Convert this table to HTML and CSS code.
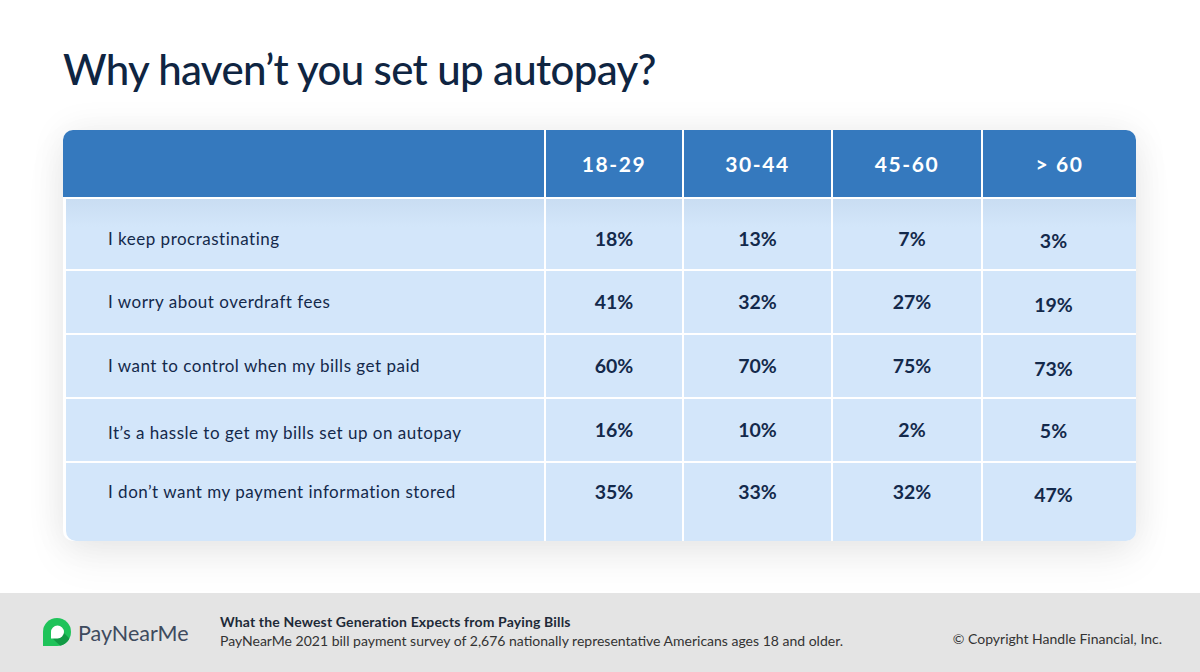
FILE: index.html
```html
<!DOCTYPE html>
<html lang="en">
<head>
<meta charset="utf-8">
<title>Why haven't you set up autopay?</title>
<link rel="stylesheet" href="styles.css">
</head>
<body>
<div class="page">
  <main class="main">
    <h1 class="title">Why haven’t you set up autopay?</h1>
    <div class="table">
      <div class="head">
        <div class="hcell hlabel"></div>
        <div class="hcell">18-29</div>
        <div class="hcell">30-44</div>
        <div class="hcell">45-60</div>
        <div class="hcell">&gt; 60</div>
      </div>
      <div class="body">
        <div class="row r1">
          <div class="cell label">I keep procrastinating</div>
          <div class="cell num">18%</div>
          <div class="cell num">13%</div>
          <div class="cell num c3">7%</div>
          <div class="cell num c4">3%</div>
        </div>
        <div class="row">
          <div class="cell label">I worry about overdraft fees</div>
          <div class="cell num">41%</div>
          <div class="cell num">32%</div>
          <div class="cell num c3">27%</div>
          <div class="cell num c4">19%</div>
        </div>
        <div class="row">
          <div class="cell label">I want to control when my bills get paid</div>
          <div class="cell num">60%</div>
          <div class="cell num">70%</div>
          <div class="cell num c3">75%</div>
          <div class="cell num c4">73%</div>
        </div>
        <div class="row r4">
          <div class="cell label">It’s a hassle to get my bills set up on autopay</div>
          <div class="cell num">16%</div>
          <div class="cell num">10%</div>
          <div class="cell num c3">2%</div>
          <div class="cell num c4">5%</div>
        </div>
        <div class="row r5">
          <div class="cell label">I don’t want my payment information stored</div>
          <div class="cell num">35%</div>
          <div class="cell num">33%</div>
          <div class="cell num c3">32%</div>
          <div class="cell num c4">47%</div>
        </div>
      </div>
    </div>
  </main>
  <footer class="footer">
    <div class="brand">
      <svg class="logo" width="34" height="30" viewBox="0 0 34 30" aria-hidden="true">
        <defs>
          <clipPath id="pin">
            <path d="M3 29 L3 15 A14 14 0 1 1 17 29 Z"/>
          </clipPath>
        </defs>
        <path d="M3 29 L3 15 A14 14 0 1 1 17 29 Z" fill="#1fc35a"/>
        <g clip-path="url(#pin)">
          <path d="M13 22 L21 13 L36 28 L28 36 Z" fill="#129a45"/>
        </g>
        <path d="M11 21.5 L11 15 A6.5 6.5 0 1 1 17.5 21.5 Z" fill="#ffffff"/>
      </svg>
      <span class="brand-name">PayNearMe</span>
    </div>
    <div class="source">
      <div class="source-title">What the Newest Generation Expects from Paying Bills</div>
      <div class="source-text">PayNearMe 2021 bill payment survey of 2,676 nationally representative Americans ages 18 and older.</div>
    </div>
    <div class="copy">© Copyright Handle Financial, Inc.</div>
  </footer>
</div>
</body>
</html>
```
FILE: styles.css
```css
html, body {
  margin: 0;
  padding: 0;
}
body {
  width: 1200px;
  height: 672px;
  overflow: hidden;
  background: #ffffff;
  font-family: "Lato", "Liberation Sans", sans-serif;
  color: #13294b;
}
.page {
  display: flex;
  flex-direction: column;
  height: 672px;
}
.main {
  flex: 1;
  padding: 0 64px 0 63px;
}
.title {
  margin: 0;
  padding-top: 41px;
  height: 130px;
  box-sizing: border-box;
  font-family: "Lato", "Liberation Sans", sans-serif;
  font-weight: 500;
  font-size: 42px;
  line-height: 56px;
  color: #0f2542;
  letter-spacing: -0.65px;
}
.table {
  border-radius: 10px;
  box-shadow: 0 0 36px rgba(0, 0, 0, 0.07), 0 18px 44px rgba(0, 0, 0, 0.06);
  background: #ffffff;
}
.head {
  display: grid;
  grid-template-columns: 481px 136px 147px 148px 1fr;
  column-gap: 2px;
  background: #ffffff;
  border-radius: 10px 10px 0 0;
  overflow: hidden;
}
.hcell {
  background: #3579be;
  height: 67px;
  display: flex;
  align-items: center;
  justify-content: center;
  color: #ffffff;
  font-weight: 700;
  font-size: 21px;
  letter-spacing: 1.6px;
}
.body {
  margin-left: 3px;
  display: flex;
  flex-direction: column;
  row-gap: 2px;
  padding-top: 2px;
  border-radius: 0 0 10px 10px;
  overflow: hidden;
}
.row {
  display: grid;
  grid-template-columns: 478px 136px 147px 148px 1fr;
  column-gap: 2px;
  height: 62px;
}
.row.r1 { height: 70px; }
.row.r5 { height: 78px; }
.cell {
  background: #d3e6fa;
  box-sizing: border-box;
  padding-top: 20px;
  line-height: 22px;
}
.r1 .cell {
  padding-top: 29px;
  background: linear-gradient(#c9ddf2, #d3e6fa 40%);
}
.r4 .cell { padding-top: 20px; }
.r5 .cell { padding-top: 18px; }
.label {
  padding-left: 42px;
  font-size: 17px;
  letter-spacing: 0.5px;
  font-weight: 400;
  color: #13294b;
}
.num {
  text-align: center;
  font-size: 19.5px;
  font-weight: 700;
  color: #13294b;
}
.num.c3 { padding-left: 10px; }
.num.c4 { padding-right: 12px; }
.row .cell.c4 { padding-top: 23px; }
.r1 .cell.c4 { padding-top: 31px; }
.r4 .cell.c4 { padding-top: 21px; }
.r5 .cell.c4 { padding-top: 21px; }
.r4 .label { padding-top: 23px; }

.footer {
  height: 79px;
  background: #e4e4e4;
  display: flex;
  align-items: center;
  padding: 0 38px 0 40px;
  box-sizing: border-box;
}
.brand {
  display: flex;
  align-items: center;
  gap: 4px;
  width: 180px;
}
.logo {
  display: block;
  margin-top: -2px;
}
.brand-name {
  font-family: "Lato", "Liberation Sans", sans-serif;
  font-size: 21.5px;
  font-weight: 400;
  color: #3e4b5e;
}
.source {
  flex: 1;
  font-size: 14px;
  line-height: 19px;
  color: #2a2a2a;
  margin-top: -4px;
}
.source-title {
  font-weight: 700;
  color: #1e2a38;
  letter-spacing: 0.15px;
}
.source-text {
  color: #333333;
}
.copy {
  font-size: 14px;
  color: #333333;
  padding-top: 12px;
}
```
